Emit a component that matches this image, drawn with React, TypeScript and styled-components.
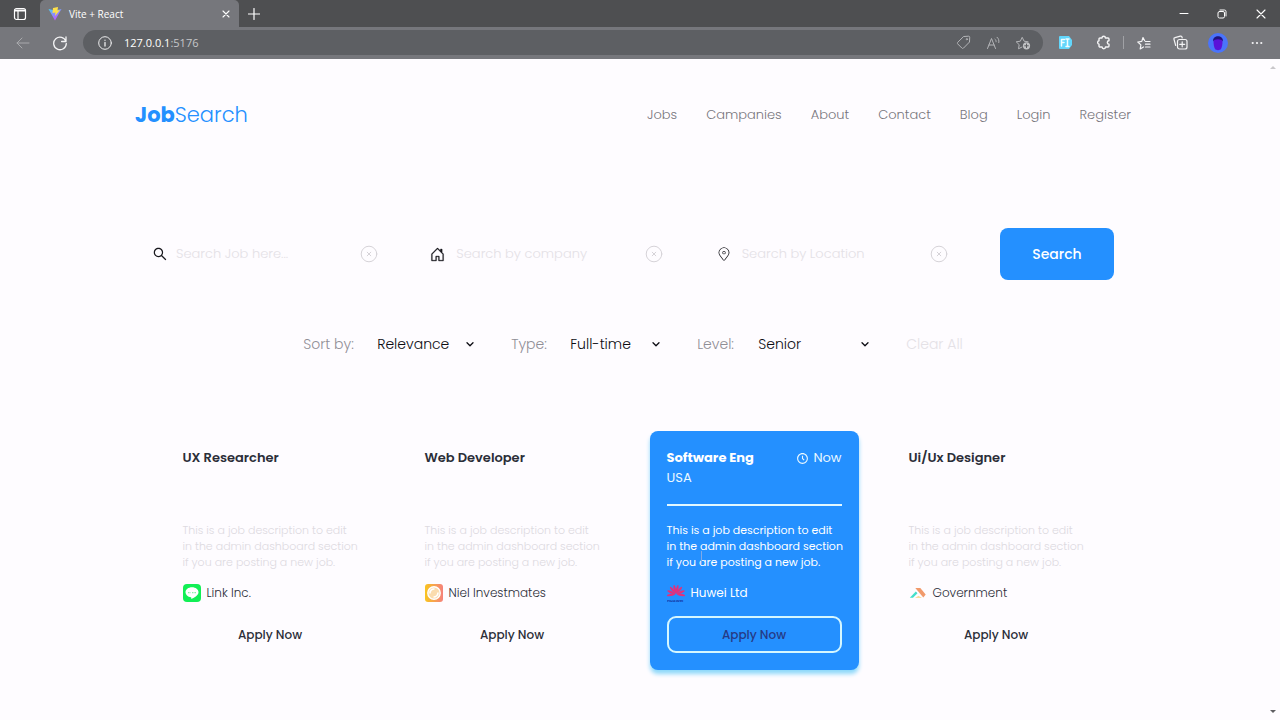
import React from "react";
import styled, { createGlobalStyle, css } from "styled-components";
import { AiOutlineSearch } from "react-icons/ai";
import { BsHouseDoor } from "react-icons/bs";
import { BiTimeFive } from "react-icons/bi";
import { CiLocationOn } from "react-icons/ci";

const blue = "#2490ff";
const paper = "#fefcff";
const ink = "#2b2e38";
const faint = "#e4e1e6";

const GlobalStyle = createGlobalStyle`
  *, *::before, *::after { box-sizing: border-box; }
  body {
    margin: 0;
    background: ${paper};
    font-family: Poppins, Inter, "Liberation Sans", sans-serif;
  }
  button, input, select { font: inherit; color: inherit; }
`;

const Window = styled.div`
  min-height: 100vh;
  display: flex;
  flex-direction: column;
`;

/* Browser frame */

const TitleBar = styled.div`
  display: flex;
  height: 27px;
  background: #4e4f51;
  color: #ffffff;
  font: 10px/26px "Open Sans", sans-serif;
`;

const ChromeButton = styled.button<{ $width: number }>`
  display: grid;
  place-items: center;
  width: ${(p) => p.$width}px;
  height: 100%;
  padding: 0;
  border: 0;
  background: none;
  color: inherit;
`;

const Tab = styled.div`
  display: flex;
  align-items: center;
  gap: 7px;
  width: 199px;
  padding-left: 8px;
  border-radius: 5px 5px 0 0;
  background: #76777c;
`;

const TabTitle = styled.span`
  flex: 1;
`;

const WindowControls = styled.div`
  display: flex;
  margin-left: auto;
`;

const ToolBar = styled.div`
  display: flex;
  align-items: center;
  height: 32px;
  padding: 0 4px 1px;
  background: #76777c;
  color: #f4f4f5;
`;

const AddressBar = styled.div`
  flex: 1;
  display: flex;
  align-items: center;
  height: 25px;
  margin: 0 4px 0 5px;
  padding: 0 5px 0 6px;
  border-radius: 13px;
  background: #5d5f63;
  color: #b4b5b8;
`;

const Address = styled.span`
  flex: 1;
  padding-left: 4px;
  font: 11px/25px "Open Sans", sans-serif;
  color: #c6c7c9;
`;

const Host = styled.span`
  color: #ffffff;
`;

const Divider = styled.span`
  width: 1px;
  height: 13px;
  background: #a0a1a5;
`;

const Viewport = styled.div`
  flex: 1;
  display: flex;
`;

const ScrollTrack = styled.div`
  display: flex;
  flex-direction: column;
  align-items: center;
  justify-content: space-between;
  width: 14px;
  padding: 6px 0;
`;

/* Page */

const Page = styled.div`
  flex: 1;
  min-width: 0;
  display: flex;
  flex-direction: column;
`;

const Header = styled.header`
  display: flex;
  align-items: center;
  justify-content: space-between;
  padding: 40px 135px;
`;

const Logo = styled.a`
  font-size: 21px;
  line-height: 32px;
  font-weight: 300;
  color: ${blue};
  text-decoration: none;
`;

const LogoBold = styled.strong`
  font-weight: 700;
`;

const Nav = styled.nav`
  display: flex;
  gap: 29px;
`;

const NavLink = styled.a`
  font-size: 13px;
  line-height: 20px;
  font-weight: 300;
  color: #78767d;
  text-decoration: none;
`;

const SearchForm = styled.form`
  display: flex;
  align-items: center;
  justify-content: space-between;
  gap: 32px;
  margin-top: 57px;
  padding: 0 152px;
`;

const Field = styled.div<{ $width: number; $gap: number }>`
  flex: 0 1 ${(p) => p.$width}px;
  min-width: 0;
  display: flex;
  align-items: center;
  gap: ${(p) => p.$gap}px;
  color: #17171c;
`;

const FieldInput = styled.input`
  flex: 1;
  width: 0;
  min-width: 0;
  padding: 0;
  border: 0;
  outline: 0;
  background: transparent;
  font-size: 13px;
  line-height: 20px;
  font-weight: 300;
  &::placeholder { color: ${faint}; opacity: 1; }
`;

const ClearField = styled.button`
  display: grid;
  padding: 0;
  border: 0;
  background: none;
  color: #d6d3d8;
`;

const SearchButton = styled.button`
  width: 114px;
  height: 52px;
  border: 0;
  border-radius: 8px;
  background: ${blue};
  color: #ffffff;
  font-size: 14px;
  font-weight: 500;
`;

const Filters = styled.div`
  display: flex;
  align-items: center;
  justify-content: center;
  gap: 36px;
  margin-top: 54px;
`;

const Filter = styled.div<{ $width: number }>`
  display: flex;
  align-items: center;
  justify-content: space-between;
  width: ${(p) => p.$width}px;
  font-size: 14px;
  line-height: 20px;
  font-weight: 300;
`;

const FilterLabel = styled.label`
  color: #908e96;
`;

const SelectBox = styled.div<{ $width: number }>`
  display: grid;
  align-items: center;
  width: ${(p) => p.$width}px;
  color: #0c0c12;
  & > * { grid-area: 1 / 1; }
  & > svg { justify-self: end; pointer-events: none; }
`;

const Select = styled.select`
  appearance: none;
  width: 100%;
  height: 20px;
  padding: 0;
  border: 0;
  background: transparent;
`;

const ClearAll = styled.button`
  padding: 0;
  border: 0;
  background: none;
  color: ${faint};
  font-size: 14px;
  line-height: 20px;
  font-weight: 300;
`;

const Jobs = styled.main`
  display: grid;
  grid-template-columns: repeat(4, 209px);
  justify-content: center;
  column-gap: 33px;
  margin-top: 77px;
`;

const JobTitle = styled.h2`
  margin: 0;
  font-size: 13px;
  line-height: 20px;
  font-weight: 600;
`;

const JobTime = styled.span`
  display: flex;
  align-items: center;
  gap: 4px;
`;

const JobHead = styled.div`
  display: flex;
  justify-content: space-between;
  font-size: 13px;
  line-height: 20px;
`;

const JobPlace = styled.p`
  height: 20px;
  margin: 0;
  font-size: 13px;
  line-height: 20px;
`;

const Rule = styled.hr`
  width: 100%;
  height: 2px;
  margin: 16px 0;
  border: 0;
  background: transparent;
`;

const Description = styled.p`
  position: relative;
  margin: 0;
  font-size: 11px;
  line-height: 16px;
  font-weight: 300;
  color: #dddadf;
  white-space: pre;
`;

const TextCursor = styled.span`
  position: absolute;
  left: 34px;
  bottom: 6px;
  width: 1px;
  height: 13px;
  background: #7fa9e8;
`;

const Company = styled.div`
  display: flex;
  align-items: center;
  gap: 6px;
  margin: 14px 0;
  font-size: 12px;
  line-height: 18px;
  font-weight: 300;
`;

const ApplyButton = styled.button`
  height: 37px;
  border: 2px solid transparent;
  border-radius: 9px;
  background: none;
  font-size: 12px;
  font-weight: 500;
`;

const Card = styled.article<{ $active: boolean }>`
  display: flex;
  flex-direction: column;
  padding: 17px;
  border-radius: 8px;
  color: ${ink};
  ${(p) =>
    p.$active &&
    css`
      background: ${blue};
      color: #eaf8ff;
      box-shadow: 0 4px 4px #8ed8fa;
      ${JobTitle} { font-weight: 700; color: #ffffff; }
      ${Rule} { background: #e2f8ff; }
      ${Description} { font-weight: 400; color: #ffffff; }
      ${Company} { font-weight: 400; color: #ffffff; }
      ${ApplyButton} { border-color: #d5f7ff; color: #263a85; }
    `}
`;

const line = { fill: "none", stroke: "currentColor", strokeLinecap: "round", strokeLinejoin: "round" } as const;

const ViteLogo = () => (
  <svg width="14" height="14" viewBox="0 0 28 28">
    <defs>
      <linearGradient id="vite" x1="0" y1="0" x2="0.6" y2="1">
        <stop offset="0" stopColor="#46d3f7" />
        <stop offset="1" stopColor="#c850ff" />
      </linearGradient>
    </defs>
    <path d="M1 4l13 3 13-3-13 23z" fill="url(#vite)" />
    <path d="M10 2l10-2-1 7 5-1-10 12 1-7-6 1z" fill="#ffe14a" />
  </svg>
);

const Chevron = () => (
  <svg width="10" height="10" viewBox="0 0 10 10" {...line} strokeWidth="1.3">
    <path d="M2 3.700l3 3 3-3" />
  </svg>
);

const ClearIcon = () => (
  <svg width="18" height="18" viewBox="0 0 18 18" {...line}>
    <circle cx="9" cy="9" r="7.800" />
    <path d="M7.200 7.200l3.600 3.600M10.800 7.200l-3.600 3.600" />
  </svg>
);

const LineLogo = () => (
  <svg width="18" height="18" viewBox="0 0 18 18">
    <rect width="18" height="18" rx="4" fill="#12ef55" />
    <path d="M9 3.200c-3.700 0-6.500 2.200-6.500 5.100 0 2.700 2.200 4.600 5.300 5 .8.1.4.8.5 1.700 2.400-1 7.200-3.600 7.200-6.700 0-2.900-2.800-5.100-6.500-5.100z" fill="#fff" />
    <path d="M5 8.600h1.600M7.500 8.600h.5M9 8.600h1.500M11.400 8.600H13" stroke="#8aeeaa" strokeWidth="1.200" />
  </svg>
);

const NielLogo = () => (
  <svg width="18" height="18" viewBox="0 0 18 18">
    <defs>
      <linearGradient id="niel">
        <stop offset="0" stopColor="#f9c51f" />
        <stop offset="1" stopColor="#f5817c" />
      </linearGradient>
    </defs>
    <rect width="18" height="18" rx="3" fill="url(#niel)" />
    <circle cx="9" cy="9" r="6.200" fill="#fbdcae" stroke="#fff" strokeWidth="1.400" />
    <path d="M5 9.500A4 4 0 0 1 9.500 5M13 8.500A4.500 4.500 0 0 1 8.500 13" fill="none" stroke="#fff" strokeWidth="1.600" />
  </svg>
);

const HuaweiLogo = () => (
  <svg width="18" height="18" viewBox="0 0 18 18">
    <g fill="#e4307a">
      {[-98, -68, -39, -13, 13, 39, 68, 98].map((angle) => (
        <path key={angle} d="M9 9.800C7.900 7.500 7.300 4 8.500 1h1C10.700 4 10.100 7.500 9 9.800z" transform={`rotate(${angle} 9 10.200)`} />
      ))}
    </g>
    <text x="0" y="18" fontSize="4" fontWeight="700" fill="#153fae">HUAWEI</text>
  </svg>
);

const GovernmentLogo = () => (
  <svg width="18" height="18" viewBox="0 0 18 18">
    <path d="M6.300 4h5l5.400 6.400-2.400 3.200z" fill="#f19a6b" />
    <path d="M6.800 7.500L8.500 9.200 4 13.800H.8z" fill="#45dfca" />
    <path d="M6 14l3.500-2.200 3.500 2.200z" fill="#fbdc9c" />
  </svg>
);

const jobs = [
  { title: "UX Researcher", company: "Link Inc.", logo: <LineLogo /> },
  { title: "Web Developer", company: "Niel Investmates", logo: <NielLogo /> },
  { title: "Software Eng", company: "Huwei Ltd", logo: <HuaweiLogo />, place: "USA", time: "Now" },
  { title: "Ui/Ux Designer", company: "Government", logo: <GovernmentLogo /> },
];

const fields = [
  { label: "Search Job here...", icon: <AiOutlineSearch size={16} />, width: 226, gap: 8 },
  { label: "Search by company", icon: <BsHouseDoor size={15} strokeWidth={0.3} />, width: 233, gap: 11 },
  { label: "Search by Location", icon: <CiLocationOn size={16} />, width: 232, gap: 10 },
];

const filters = [
  { id: "sort", label: "Sort by:", width: 172, box: 98, options: ["Relevance", "Inclusive", "Starts with"] },
  { id: "type", label: "Type:", width: 150, box: 91, options: ["Full-time", "Remote", "Contract"] },
  { id: "level", label: "Level:", width: 173, box: 112, options: ["Senior", "Beginner", "Advocate"] },
];

const links = ["Jobs", "Campanies", "About", "Contact", "Blog", "Login", "Register"];
const description = "This is a job description to edit\nin the admin dashboard section\nif you are posting a new job.";

function BrowserFrame() {
  return (
    <>
      <TitleBar>
        <ChromeButton $width={40} aria-label="Tab actions">
          <svg width="14" height="14" viewBox="0 0 14 14" {...line} strokeWidth="1.200">
            <rect x="1.500" y="1.500" width="11" height="11" rx="2" />
            <path d="M2 3.500h10" strokeWidth="2" />
            <path d="M5 4v8" />
          </svg>
        </ChromeButton>
        <Tab>
          <ViteLogo />
          <TabTitle>Vite + React</TabTitle>
          <ChromeButton $width={26} aria-label="Close tab">
            <svg width="8" height="8" viewBox="0 0 8 8" {...line} strokeWidth="1.100"><path d="M1 1l6 6M7 1L1 7" /></svg>
          </ChromeButton>
        </Tab>
        <ChromeButton $width={30} aria-label="New tab">
          <svg width="12" height="12" viewBox="0 0 12 12" {...line} strokeWidth="1.200"><path d="M6 .500v11M.500 6h11" /></svg>
        </ChromeButton>
        <WindowControls>
          <ChromeButton $width={38} aria-label="Minimize">
            <svg width="10" height="10" viewBox="0 0 10 10" {...line}><path d="M1 4.500h8" /></svg>
          </ChromeButton>
          <ChromeButton $width={38} aria-label="Restore">
            <svg width="10" height="10" viewBox="0 0 10 10" {...line}>
              <rect x="1" y="2.500" width="6.500" height="6.500" rx="1.500" />
              <path d="M3 1h4.500A1.500 1.500 0 0 1 9 2.500V7" />
            </svg>
          </ChromeButton>
          <ChromeButton $width={39} aria-label="Close">
            <svg width="10" height="10" viewBox="0 0 10 10" {...line} strokeWidth="1.100"><path d="M1 1l8 8M9 1L1 9" /></svg>
          </ChromeButton>
        </WindowControls>
      </TitleBar>
      <ToolBar>
        <ChromeButton $width={37} aria-label="Back">
          <svg width="14" height="12" viewBox="0 0 14 12" {...line} stroke="#a9aaad"><path d="M13 6H1M6 1L1 6l5 5" /></svg>
        </ChromeButton>
        <ChromeButton $width={37} aria-label="Refresh">
          <svg width="16" height="16" viewBox="0 0 16 16" {...line} strokeWidth="1.300">
            <path d="M14 6.500A6.300 6.300 0 1 0 14.300 8.500M14 2v4.500H9.600" />
          </svg>
        </ChromeButton>
        <AddressBar>
          <ChromeButton $width={31} aria-label="Site information">
            <svg width="14" height="14" viewBox="0 0 14 14" {...line} stroke="#ededee">
              <circle cx="7" cy="7" r="6.300" /><path d="M7 6.500v3.500M7 4.200v.1" strokeWidth="1.300" />
            </svg>
          </ChromeButton>
          <Address><Host>127.0.0.1</Host>:5176</Address>
          <ChromeButton $width={30} aria-label="Shopping">
            <svg width="15" height="15" viewBox="0 0 15 15" {...line}>
              <path d="M8 1.500l4.500-.3c.8 0 1.200.4 1.200 1.200L13.500 7 7.600 13c-.6.600-1.200.600-1.800 0L1.800 9c-.6-.6-.6-1.200 0-1.800z" />
              <circle cx="10.800" cy="4.200" r=".6" />
            </svg>
          </ChromeButton>
          <ChromeButton $width={30} aria-label="Read aloud">
            <svg width="15" height="14" viewBox="0 0 15 14" {...line}>
              <path d="M1.500 12.500L5.500 2.500l4 10M3 9h5M9 3.200c.9.700 1.200 1.600 1.100 2.600M11 1.200c1.700 1.300 2.200 3.300 1.800 5.300" />
            </svg>
          </ChromeButton>
          <ChromeButton $width={30} aria-label="Add to favorites">
            <svg width="16" height="15" viewBox="0 0 16 15" {...line}>
              <path d="M7 12l-3.500 1.800.7-4.100L1.200 6.800l4.100-.6L7.200 2.300l1.900 3.900 4 .6" />
              <circle cx="11.500" cy="10.800" r="3.600" fill="#c1c2c4" stroke="none" />
              <path d="M11.500 9v3.600M9.700 10.800h3.600" stroke="#5d5f63" />
            </svg>
          </ChromeButton>
        </AddressBar>
        <ChromeButton $width={36} aria-label="Font extension">
          <svg width="15" height="15" viewBox="0 0 15 15" {...line} strokeWidth="1.500">
            <path d="M2 1h9l3 4v5l-3 4H2a1 1 0 0 1-1-1V2a1 1 0 0 1 1-1z" fill="#62d6fb" stroke="none" />
            <path d="M3.500 11V4.500H6.500M3.500 7.500H6M8 4h3M9.500 4v7.500M8 11.500h3" stroke="#effcff" />
          </svg>
        </ChromeButton>
        <ChromeButton $width={40} aria-label="Extensions">
          <svg width="15" height="15" viewBox="0 0 15 15" {...line} strokeWidth="1.400">
            <path d="M4 3h2a1.700 1.700 0 0 1 3.400 0H12a1 1 0 0 1 1 1v1.800a1.700 1.700 0 0 0 0 3.400V11a1 1 0 0 1-1 1H9.500a1.700 1.700 0 0 1-3.400 0H4a1 1 0 0 1-1-1V9.300a1.800 1.800 0 0 1 0-3.500V4a1 1 0 0 1 1-1z" />
          </svg>
        </ChromeButton>
        <Divider />
        <ChromeButton $width={38} aria-label="Favorites">
          <svg width="15" height="14" viewBox="0 0 15 14" {...line} strokeWidth="1.200">
            <path d="M7.500 11l-3.300 1.900.7-4L1.800 6l4-.6L7 1.500l1.700 3.300M9.500 5.500H14M9.500 8.200H14M9.500 11H14" />
          </svg>
        </ChromeButton>
        <ChromeButton $width={36} aria-label="Collections">
          <svg width="15" height="15" viewBox="0 0 15 15" {...line} strokeWidth="1.200">
            <rect x="4.500" y="4.500" width="9.500" height="9.500" rx="2" />
            <path d="M9.200 6.800v5M6.700 9.300h5M2.700 10.500L1 4.300c-.2-.8.200-1.500 1-1.700l5.300-1.500c.8-.2 1.500.2 1.700 1l.2.900" />
          </svg>
        </ChromeButton>
        <ChromeButton $width={40} aria-label="Profile">
          <svg width="20" height="20" viewBox="0 0 20 20">
            <circle cx="10" cy="10" r="10" fill="#4a74fb" />
            <path d="M5.500 8c0-5 9-5 9 0 0 3.500-.5 5.500-1.500 8-1 1.500-5 1.500-6 0-1-2.500-1.500-4.500-1.500-8z" fill="#5a12d8" />
            <path d="M5 8.500c-.5-7 10.500-7 10 0-1-3-9-3-10 0z" fill="#20147c" />
          </svg>
        </ChromeButton>
        <ChromeButton $width={38} aria-label="Settings and more">
          <svg width="12" height="4" viewBox="0 0 12 4" fill="currentColor">
            <circle cx="1.700" cy="2" r="1.100" /><circle cx="6" cy="2" r="1.100" /><circle cx="10.300" cy="2" r="1.100" />
          </svg>
        </ChromeButton>
      </ToolBar>
    </>
  );
}

export default function App() {
  return (
    <Window>
      <GlobalStyle />
      <BrowserFrame />
      <Viewport>
        <Page>
          <Header>
            <Logo href="#"><LogoBold>Job</LogoBold>Search</Logo>
            <Nav>
              {links.map((link) => <NavLink key={link} href="#">{link}</NavLink>)}
            </Nav>
          </Header>
          <SearchForm onSubmit={(event) => event.preventDefault()}>
            {fields.map((field) => (
              <Field key={field.label} $width={field.width} $gap={field.gap}>
                {field.icon}
                <FieldInput type="text" placeholder={field.label} aria-label={field.label} />
                <ClearField type="reset" aria-label="Clear"><ClearIcon /></ClearField>
              </Field>
            ))}
            <SearchButton type="submit">Search</SearchButton>
          </SearchForm>
          <Filters>
            {filters.map((filter) => (
              <Filter key={filter.id} $width={filter.width}>
                <FilterLabel htmlFor={filter.id}>{filter.label}</FilterLabel>
                <SelectBox $width={filter.box}>
                  <Select id={filter.id}>
                    {filter.options.map((option) => <option key={option}>{option}</option>)}
                  </Select>
                  <Chevron />
                </SelectBox>
              </Filter>
            ))}
            <ClearAll type="button">Clear All</ClearAll>
          </Filters>
          <Jobs>
            {jobs.map((job) => (
              <Card key={job.title} $active={Boolean(job.time)}>
                <JobHead>
                  <JobTitle>{job.title}</JobTitle>
                  {job.time && <JobTime><BiTimeFive size={13} />{job.time}</JobTime>}
                </JobHead>
                <JobPlace>{job.place}</JobPlace>
                <Rule />
                <Description>
                  {description}
                  {job.time && <TextCursor />}
                </Description>
                <Company>{job.logo}{job.company}</Company>
                <ApplyButton type="button">Apply Now</ApplyButton>
              </Card>
            ))}
          </Jobs>
        </Page>
        <ScrollTrack>
          <svg width="6" height="4" viewBox="0 0 6 4"><path d="M0 4l3-3 3 3z" fill="#c9c7cb" /></svg>
          <svg width="6" height="4" viewBox="0 0 6 4"><path d="M0 0l3 3 3-3z" fill="#5f5e62" /></svg>
        </ScrollTrack>
      </Viewport>
    </Window>
  );
}
